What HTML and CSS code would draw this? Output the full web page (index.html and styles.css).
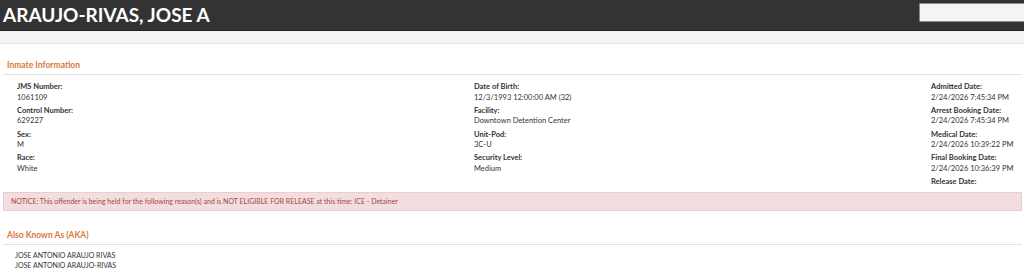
FILE: index.html
```html
<!DOCTYPE html>
<html lang="en">
<head>
    <meta charset="UTF-8">
    <meta name="viewport" content="width=device-width, initial-scale=1.0">
    <title>Inmate Details</title>
    <link rel="stylesheet" href="styles.css">
</head>
<body>

<!-- Header -->
<header class="topbar">
    <h1 class="inmate-name">ARAUJO-RIVAS, JOSE A</h1>
    <input type="text" class="search-box">
</header>
<div class="subbar"></div>

<main class="content">

    <section class="panel">
        <h2 class="panel-title">Inmate Information</h2>
        <div class="info-grid">
            <dl class="info-col">
                <dt>JMS Number:</dt>
                <dd>1061109</dd>
                <dt>Control Number:</dt>
                <dd>629227</dd>
                <dt>Sex:</dt>
                <dd>M</dd>
                <dt>Race:</dt>
                <dd>White</dd>
            </dl>
            <dl class="info-col">
                <dt>Date of Birth:</dt>
                <dd>12/3/1993 12:00:00 AM (32)</dd>
                <dt>Facility:</dt>
                <dd>Downtown Detention Center</dd>
                <dt>Unit-Pod:</dt>
                <dd>3C-U</dd>
                <dt>Security Level:</dt>
                <dd>Medium</dd>
            </dl>
            <dl class="info-col">
                <dt>Admitted Date:</dt>
                <dd>2/24/2026 7:45:34 PM</dd>
                <dt>Arrest Booking Date:</dt>
                <dd>2/24/2026 7:45:34 PM</dd>
                <dt>Medical Date:</dt>
                <dd>2/24/2026 10:39:22 PM</dd>
                <dt>Final Booking Date:</dt>
                <dd>2/24/2026 10:36:39 PM</dd>
                <dt>Release Date:</dt>
                <dd></dd>
            </dl>
        </div>
    </section>

    <div class="notice">
        NOTICE: This offender is being held for the following reason(s) and is NOT ELIGIBLE FOR RELEASE at this time: ICE - Detainer
    </div>

    <section class="panel">
        <h2 class="panel-title aka-title">Also Known As (AKA)</h2>
        <ul class="aka-list">
            <li>JOSE ANTONIO ARAUJO RIVAS</li>
            <li>JOSE ANTONIO ARAUJO-RIVAS</li>
        </ul>
    </section>

</main>

</body>
</html>
```

FILE: styles.css
```css
body {
    font-family: Lato, "Open Sans", sans-serif;
    color: #333;
    background: #fff;
    margin: 0;
    padding: 0;
}

.topbar {
    background: #333333;
    border-bottom: 1px solid #222;
    height: 30px;
    display: flex;
    align-items: center;
    justify-content: space-between;
    padding-left: 3px;
    overflow: hidden;
}

.inmate-name {
    color: #fff;
    font-size: 19px;
    font-weight: bold;
    margin: 0;
    line-height: 30px;
}

.search-box {
    width: 110px;
    height: 19px;
    margin: -5px -5px 0 0;
    padding: 0;
    border: 1px solid #8a8a8a;
    background: #f4f4f4;
    box-sizing: border-box;
    border-radius: 1px;
}

.subbar {
    background: #f4f4f4;
    height: 12px;
    border-bottom: 1px solid #e6e6e6;
}

.content {
    padding: 0 2px 0 3px;
}

.panel-title {
    color: #d9783a;
    font-size: 8.5px;
    font-weight: bold;
    margin: 0;
    padding: 16px 4px 4px;
    border-bottom: 1px solid #e3e3e3;
}

.aka-title {
    padding-top: 19px;
}

.info-grid {
    display: grid;
    grid-template-columns: 457px 457px auto;
    padding: 7px 0 0 14px;
}

.info-col {
    margin: 0;
    font-size: 7.5px;
    line-height: 10.5px;
}

.info-col dt {
    font-weight: bold;
    color: #333;
}

.info-col dd {
    margin: 0 0 2.8px;
    color: #333;
}

.notice {
    background: #f2dede;
    border: 1px solid #ebccd1;
    color: #a94442;
    font-size: 7px;
    line-height: 9px;
    padding: 4px 7px;
    margin-top: 2px;
}

.aka-list {
    list-style: none;
    margin: 0;
    padding: 5px 0 0 12px;
    font-size: 7px;
    line-height: 10px;
    color: #333;
}
```
